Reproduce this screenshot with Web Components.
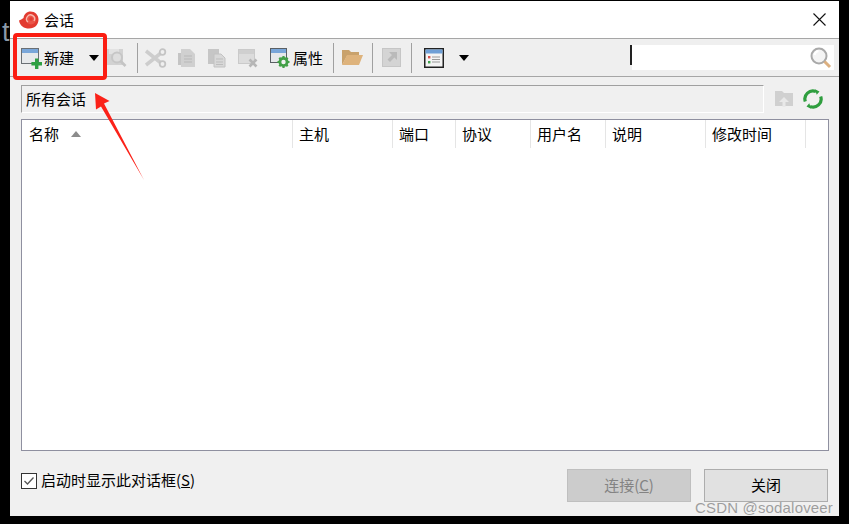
<!DOCTYPE html>
<html>
<head>
<meta charset="utf-8">
<style>
  html, body { margin: 0; height: 100%; background: #000; overflow: hidden; }
</style>
</head>
<body>
<session-dialog></session-dialog>

<script>
const FONT = `"Noto Sans CJK SC", "Noto Sans", sans-serif`;

// toolbar icons; the disabled ones get a slight blur like the scaled-up shot
const icons = {
  add: `<svg width="22" height="22" viewBox="0 0 22 22"><rect x=".5" y="1.500" width="17" height="15" fill="#e6e8ea" stroke="#6a6f74"/><rect x="1" y="2" width="16" height="4" fill="#79a6d9"/><path d="M14 11.500h3.400v3.600H21v3.300h-3.600V22H14v-3.600h-3.600v-3.300H14z" fill="#2ea043"/></svg>`,
  search: `<svg class="off" width="20" height="20" viewBox="0 0 20 20"><rect x="0" y="1" width="16" height="16" fill="#d2d2d2"/><rect x="2" y="1" width="10" height="5" fill="#e2e2e2"/><circle cx="10" cy="9.500" r="5" fill="#dedede" stroke="#c6c6c6" stroke-width="2"/><path d="M13.500 13l5 5" stroke="#c4c4c4" stroke-width="2.600"/></svg>`,
  cut: `<svg class="off" width="22" height="20" viewBox="0 0 22 20"><path d="M1 3l15 12M1 17L16 5" stroke="#cdcdcd" stroke-width="3.600" fill="none"/><circle cx="17.500" cy="4" r="2.800" fill="#efefef" stroke="#c4c4c4" stroke-width="1.800"/><circle cx="17.500" cy="16" r="2.800" fill="#efefef" stroke="#c4c4c4" stroke-width="1.800"/></svg>`,
  copy: `<svg class="off" width="20" height="20" viewBox="0 0 20 20"><path d="M4 1h9l5 5v13H4z" fill="#d0d0d0"/><path d="M1 5h3v12H1z" fill="#c4c4c4"/><path d="M7 8h8M7 11h8M7 14h8" stroke="#b8b8b8"/></svg>`,
  paste: `<svg class="off" width="20" height="20" viewBox="0 0 20 20"><path d="M1 1h11v15H1z" fill="#c6c6c6"/><path d="M7 6h7l4 4v9H7z" fill="#d8d8d8" stroke="#c2c2c2"/><path d="M9 11h7M9 14h7M9 16.500h7" stroke="#bdbdbd"/></svg>`,
  remove: `<svg class="off" width="20" height="20" viewBox="0 0 20 20"><rect x=".5" y="1.500" width="16" height="14" fill="#dcdcdc" stroke="#cacaca"/><rect x="1" y="2" width="15" height="4" fill="#cfcfcf"/><path d="M11.500 11.500l7 7M18.500 11.500l-7 7" stroke="#b6b6b6" stroke-width="2.600"/></svg>`,
  props: `<svg width="22" height="22" viewBox="0 0 22 22"><rect x=".5" y="1.500" width="16" height="14" fill="#e6e8ea" stroke="#5a5f64"/><rect x="1" y="2" width="15" height="4" fill="#79a6d9"/><circle cx="13.500" cy="15" r="3.600" fill="#f2f2f2" stroke="#43a047" stroke-width="2.800"/><path d="M13.500 9v2.400M13.500 18.600V21M7.500 15h2.400M17.100 15h2.400M9.300 10.800l1.600 1.600M16.100 17.600l1.600 1.600M17.700 10.800l-1.600 1.600M10.900 17.600l-1.600 1.600" stroke="#43a047" stroke-width="2.200"/></svg>`,
  folder: `<svg width="22" height="20" viewBox="0 0 22 20"><path d="M0 2h7l2 2h8v4H5L0 17z" fill="#c9a26c"/><path d="M5 7h16l-4 10H0z" fill="#deb37c"/></svg>`,
  shortcut: `<svg class="off" width="20" height="20" viewBox="0 0 20 20"><rect x=".5" y=".5" width="18" height="18" fill="#d4d4d4" stroke="#c6c6c6"/><path d="M7 4h8v8l-2.600-2.600L8 14l-2.500-2.500L10 7z" fill="#bababa"/></svg>`,
  view: `<svg width="20" height="20" viewBox="0 0 20 20"><rect x=".75" y=".75" width="18.500" height="18.500" fill="#f4f4f4" stroke="#222" stroke-width="1.500"/><rect x="1.500" y="1.500" width="17" height="4" fill="#6f9fd6"/><rect x="4" y="8" width="2.400" height="2.400" fill="#d9534f"/><rect x="4" y="13" width="2.400" height="2.400" fill="#3fa34d"/><path d="M8 9h8M8 11.500h8M8 14h8" stroke="#9a9a9a"/></svg>`,
  cloud: `<svg class="off" width="18" height="18" viewBox="0 0 18 18"><path d="M0 1h7l2 2h9v13H0z" fill="#d0d0d0"/><path d="M9 7l5 5h-3.500v5h-3v-5H4z" fill="#e8e8e8"/></svg>`,
  refresh: `<svg width="20" height="20" viewBox="0 0 20 20"><path d="M2.300 12.500A8 8 0 0 1 13 2.600" fill="none" stroke="#2f9e3f" stroke-width="3.200"/><path d="M17.700 7.500A8 8 0 0 1 7 17.400" fill="none" stroke="#2f9e3f" stroke-width="3.200"/><path d="M12 .2l4.500 2.200-2.800 3.400zM8 19.800l-4.500-2.200 2.800-3.400z" fill="#2f9e3f"/></svg>`,
  lens: `<svg width="22" height="22" viewBox="0 0 22 22"><circle cx="9" cy="9" r="7.500" fill="#f4f4f4" stroke="#a9a9a9" stroke-width="2"/><path d="M4.500 8a5 5 0 0 1 4-4" stroke="#fff" stroke-width="2" fill="none"/><path d="M14.500 14.500l5.500 5.500" stroke="#dcb080" stroke-width="3"/></svg>`
};

class ToolButton extends HTMLElement {
  constructor() {
    super();
    this.attachShadow({ mode: "open" }).innerHTML = `
      <style>
        :host { display: flex; align-items: center; height: 22px; gap: 1px; color: #000; flex: none; }
        span { display: flex; }
        .off { filter: blur(.35px); }
      </style>
      <span id="icon"></span><slot></slot>`;
  }
  connectedCallback() {
    this.shadowRoot.querySelector("#icon").innerHTML = icons[this.getAttribute("icon")] || "";
  }
}

class ToolBar extends HTMLElement {
  constructor() {
    super();
    this.attachShadow({ mode: "open" }).innerHTML = `
      <style>
        :host {
          display: flex; align-items: center; height: 39px; flex: none; box-sizing: border-box;
          padding-left: 11px; background: #efefef;
          border-top: 1px solid #a6a6a6; border-bottom: 1px solid #a6a6a6;
        }
        ::slotted(.sep) { flex: none; width: 1px; height: 30px; background: #a0a0a0; }
        ::slotted(.caret) {
          flex: none; width: 0; height: 0; border: 5px solid transparent; border-top: 6px solid #000; border-bottom: 0;
        }
      </style>
      <slot></slot>`;
  }
}

class SearchBox extends HTMLElement {
  constructor() {
    super();
    this.attachShadow({ mode: "open" }).innerHTML = `
      <style>
        :host {
          display: flex; align-items: center; justify-content: flex-end; box-sizing: border-box;
          width: 202px; height: 25px; background: #fff; margin-left: auto; margin-right: 5px;
        }
        i { width: 2px; height: 20px; background: #222; margin-right: auto; margin-left: -2px; margin-top: -5px; }
        span { display: flex; margin-right: 2px; }
      </style>
      <i></i><span>${icons.lens}</span>`;
  }
}

class PathBar extends HTMLElement {
  constructor() {
    super();
    this.attachShadow({ mode: "open" }).innerHTML = `
      <style>
        :host { display: flex; align-items: center; height: 28px; flex: none; }
        #box {
          flex: none; width: 743px; height: 28px; box-sizing: border-box; padding-left: 4px;
          display: flex; align-items: center;
          border: 1px solid #a0a0a0; border-right-color: #fff; border-bottom-color: #fff;
        }
        span { display: flex; }
        .cloud { margin-left: 11px; filter: blur(.35px); }
        .refresh { margin-left: 10px; }
      </style>
      <div id="box"><slot></slot></div>
      <span class="cloud">${icons.cloud}</span>
      <span class="refresh">${icons.refresh}</span>`;
  }
}

// columns: label and width, the rest of the row stays empty
class SessionTable extends HTMLElement {
  constructor() {
    super();
    const cols = [["名称", 271], ["主机", 100], ["端口", 63], ["协议", 75], ["用户名", 75], ["说明", 100], ["修改时间", 100]];
    const heads = cols.map(([label, w], i) =>
      `<div class="col" style="width:${w}px">${label}${i === 0 ? '<b></b>' : ""}</div>`).join("");
    this.attachShadow({ mode: "open" }).innerHTML = `
      <style>
        :host {
          display: block; flex: none; margin-top: 6px; height: 332px; box-sizing: border-box;
          background: #fff; border: 1px solid #8f90a0; color: #000;
        }
        #head { display: flex; height: 28px; }
        .col {
          flex: none; box-sizing: border-box; padding-left: 6px; line-height: 28px;
          border-right: 1px solid #e5e5e5; display: flex; align-items: center; white-space: nowrap;
        }
        .col:first-child { padding-left: 7px; }
        b {
          width: 0; height: 0; margin-left: 12px; margin-top: -1px;
          border: 5px solid transparent; border-bottom: 6px solid #8c8c8c; border-top: 0;
        }
      </style>
      <div id="head">${heads}</div>`;
  }
}

class CheckField extends HTMLElement {
  constructor() {
    super();
    this.attachShadow({ mode: "open" }).innerHTML = `
      <style>
        :host { display: flex; align-items: center; gap: 4px; color: #000; }
        svg { display: block; }
        span { margin-top: -2px; }
      </style>
      <svg width="16" height="16" viewBox="0 0 16 16">
        <rect x=".5" y=".5" width="15" height="15" fill="#fff" stroke="#333"/>
        <path d="M3.500 8l3 3 6-6.500" fill="none" stroke="#555" stroke-width="1.300"/>
      </svg>
      <span><slot></slot></span>`;
  }
}

class DialogButton extends HTMLElement {
  constructor() {
    super();
    this.attachShadow({ mode: "open" }).innerHTML = `
      <style>
        :host {
          display: flex; align-items: center; justify-content: center; box-sizing: border-box; flex: none;
          width: 124px; height: 33px; padding-bottom: 2px; background: #e1e1e1; border: 1px solid #adadad; color: #000;
        }
        :host([disabled]) { background: #cccccc; border-color: #bfbfbf; color: #838383; }
      </style>
      <slot></slot>`;
  }
}

class SessionDialog extends HTMLElement {
  constructor() {
    super();
    this.attachShadow({ mode: "open" }).innerHTML = `
      <style>
        :host {
          display: flex; flex-direction: column; box-sizing: border-box;
          position: absolute; left: 10px; top: 1px; width: 829px; height: 515px;
          background: #f0f0f0; font: 15px/20px ${FONT}; color: #000;
        }
        #title {
          display: flex; align-items: center; height: 37px; flex: none; background: #fff;
          padding-left: 9px; gap: 5px;
        }
        #title svg.close { margin-left: auto; margin-right: 13px; }
        #body { flex: 1; display: flex; flex-direction: column; padding: 8px 10px 0 11px; }
        #foot { display: flex; align-items: center; margin-top: 18px; gap: 13px; padding-right: 1px; }
        #foot check-field { margin-right: auto; margin-bottom: 10px; }
        /* left margin glyph and the annotations drawn on top of the shot */
        #mark { position: absolute; left: -8px; top: 17px; font: 27px/28px "Liberation Sans", sans-serif; color: #8b9aa8; }
        #notes { position: absolute; left: -10px; top: -1px; pointer-events: none; }
        #wm {
          position: absolute; right: 6px; bottom: -2px; font: 15px/20px "Liberation Sans", sans-serif;
          color: rgba(130,130,130,.75); letter-spacing: .17px; white-space: nowrap;
        }
      </style>
      <div id="mark">t</div>
      <div id="title">
        <svg width="20" height="18" viewBox="0 0 20 18">
          <path d="M0 9.500C1 15 5 17.500 10 17.500c6 0 9.500-4 9.500-9C19.500 4 16 .5 11.500.5 8 .5 5 3 4.500 7 3 8 1.500 9 0 9.500z" fill="#e23b30"/>
          <circle cx="12" cy="8.500" r="5" fill="#ea5548"/>
          <path d="M9 11a4 4 0 1 1 6 -1" fill="none" stroke="#f8b9ae" stroke-width="1.300"/>
          <circle cx="12" cy="8" r="1.800" fill="#e23b30"/>
        </svg>
        <span>会话</span>
        <svg class="close" width="13" height="13" viewBox="0 0 13 13"><path d="M.5.500l12 12M12.500.500l-12 12" stroke="#111" stroke-width="1.100"/></svg>
      </div>
      <tool-bar>
        <tool-button icon="add">新建</tool-button>
        <div class="caret" style="margin-left:15px"></div>
        <tool-button icon="search" style="margin-left:8px"></tool-button>
        <div class="sep" style="margin-left:10px"></div>
        <tool-button icon="cut" style="margin-left:7px"></tool-button>
        <tool-button icon="copy" style="margin-left:10px"></tool-button>
        <tool-button icon="paste" style="margin-left:10px"></tool-button>
        <tool-button icon="remove" style="margin-left:11px"></tool-button>
        <tool-button icon="props" style="margin-left:12px">属性</tool-button>
        <div class="sep" style="margin-left:10px"></div>
        <tool-button icon="folder" style="margin-left:8px"></tool-button>
        <div class="sep" style="margin-left:8px"></div>
        <tool-button icon="shortcut" style="margin-left:9px"></tool-button>
        <div class="sep" style="margin-left:9px"></div>
        <tool-button icon="view" style="margin-left:12px"></tool-button>
        <div class="caret" style="margin-left:15px"></div>
        <search-box></search-box>
      </tool-bar>
      <div id="body">
        <path-bar>所有会话</path-bar>
        <session-table></session-table>
        <div id="foot">
          <check-field>启动时显示此对话框(<u>S</u>)</check-field>
          <dialog-button disabled>连接(<u>C</u>)</dialog-button>
          <dialog-button>关闭</dialog-button>
        </div>
      </div>
      <svg id="notes" width="849" height="524" viewBox="0 0 849 524">
        <rect x="15" y="35" width="90" height="43" rx="2" fill="none" stroke="#fb1d12" stroke-width="4"/>
        <path d="M95 93l14.500 8-5.500 2.500 40 76.500-43-73.500-5 3z" fill="#fb2219"/>
      </svg>
      <div id="wm">CSDN @sodaloveer</div>`;
  }
}

customElements.define("tool-button", ToolButton);
customElements.define("tool-bar", ToolBar);
customElements.define("search-box", SearchBox);
customElements.define("path-bar", PathBar);
customElements.define("session-table", SessionTable);
customElements.define("check-field", CheckField);
customElements.define("dialog-button", DialogButton);
customElements.define("session-dialog", SessionDialog);
</script>
</body>
</html>
